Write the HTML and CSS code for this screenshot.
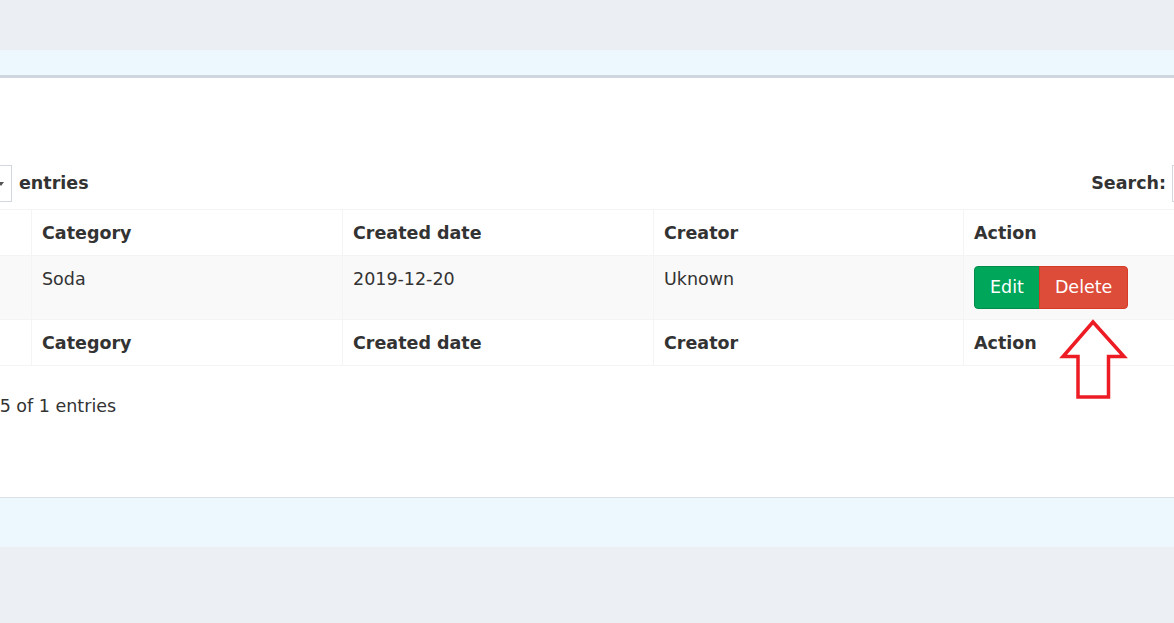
FILE: index.html
```html
<!DOCTYPE html>
<html>
<head>
<meta charset="utf-8">
<link rel="stylesheet" href="styles.css">
</head>
<body>
<div class="top-gray"></div>
<div class="band band-top"></div>
<div class="box">
  <div class="controls">
    <div class="length">
      <div class="length-inner">
        <span class="lbl">Show</span>
        <span class="select">10<span class="caret"></span></span>
      </div>
      <span class="lbl entries">entries</span>
    </div>
    <div class="search">
      <span class="lbl">Search:</span>
      <span class="search-input"></span>
    </div>
  </div>
  <table class="data">
    <colgroup>
      <col class="c"><col class="c"><col class="c"><col class="c c4"><col class="c">
    </colgroup>
    <thead>
      <tr><th>Name</th><th>Category</th><th>Created date</th><th>Creator</th><th>Action</th></tr>
    </thead>
    <tbody>
      <tr class="odd">
        <td>Coca Cola</td><td>Soda</td><td>2019-12-20</td><td>Uknown</td>
        <td class="actions"><div class="btn-group"><button class="btn btn-edit">Edit</button><button class="btn btn-delete">Delete</button></div></td>
      </tr>
    </tbody>
    <tfoot>
      <tr><th>Name</th><th>Category</th><th>Created date</th><th>Creator</th><th>Action</th></tr>
    </tfoot>
  </table>
  <div class="info">Showing 1 to 5 of 1 entries</div>
</div>
<div class="band band-bottom"></div>
<svg class="arrow" width="74" height="88" viewBox="1058 316 74 88" xmlns="http://www.w3.org/2000/svg">
  <polygon points="1093,322 1124,356.5 1108.5,356.5 1108.5,397 1078,397 1078,356.5 1063,356.5" fill="none" stroke="#ed1c24" stroke-width="3.5" stroke-linejoin="miter"/>
</svg>
</body>
</html>
```
FILE: styles.css
```css
html, body {
  margin: 0;
  padding: 0;
  overflow: hidden;
  background: #ecf0f5;
}
body {
  font-family: "DejaVu Sans", Verdana, sans-serif;
  font-size: 17.5px;
  line-height: 25px;
  color: #333;
  position: relative;
  height: 623px;
}
.top-gray {
  height: 50px;
  background: #ebeef3;
}
.band {
  background: #edf7fe;
}
.band-top {
  height: 25px;
}
.band-bottom {
  height: 49px;
}
.box {
  background: #fff;
  border-top: 3px solid #d0d6df;
  border-bottom: 1px solid #dbe0e6;
  margin-left: -290px;
  width: 1554px;
  padding: 87px 10px 0;
  height: 332px;
}
.controls {
  display: flex;
  justify-content: space-between;
  align-items: center;
  height: 37px;
}
.length {
  display: flex;
  align-items: center;
}
.length-inner {
  width: 292px;
  display: flex;
  justify-content: flex-end;
  align-items: center;
  gap: 7px;
}
.lbl {
  font-weight: bold;
}
.entries {
  margin-left: 7px;
}
.select {
  box-sizing: border-box;
  width: 75px;
  height: 37px;
  border: 1px solid #d2d6de;
  position: relative;
  padding: 5px 10px;
  font-weight: normal;
}
.caret {
  position: absolute;
  right: 7px;
  top: 16px;
  width: 0;
  height: 0;
  border-left: 3px solid transparent;
  border-right: 3px solid transparent;
  border-top: 4px solid #555;
}
.search {
  display: flex;
  align-items: center;
}
.search-input {
  box-sizing: border-box;
  margin-left: 6px;
  width: 102px;
  height: 37px;
  border: 1px solid #d2d6de;
}
table.data {
  margin-top: 7px;
  width: 1554px;
  table-layout: fixed;
  border-collapse: collapse;
  border: 1px solid #f4f4f4;
}
table.data col.c {
  width: 311px;
}
table.data col.c4 {
  width: 310px;
}
table.data th,
table.data td {
  border: 1px solid #f4f4f4;
  padding: 11px 10px 9px;
  text-align: left;
  vertical-align: top;
  white-space: nowrap;
  overflow: hidden;
}
table.data td.actions {
  padding-top: 10px;
  padding-bottom: 10px;
}
table.data th {
  font-weight: bold;
}
tr.odd td {
  background: #f9f9f9;
}
.btn-group {
  display: flex;
}
.btn {
  font-family: inherit;
  font-size: 17.5px;
  line-height: 25px;
  padding: 8px 15px;
  border: 1px solid transparent;
  color: #fff;
  margin: 0;
}
.btn-edit {
  background: #00a65a;
  border-color: #008d4c;
  border-radius: 4px 0 0 4px;
}
.btn-delete {
  background: #dd4b39;
  border-color: #d73925;
  border-radius: 0 4px 4px 0;
  margin-left: -1px;
}
.info {
  margin-top: 28px;
  margin-left: 160px;
  line-height: 25px;
  white-space: nowrap;
}
.arrow {
  position: absolute;
  left: 1058px;
  top: 316px;
}
```
